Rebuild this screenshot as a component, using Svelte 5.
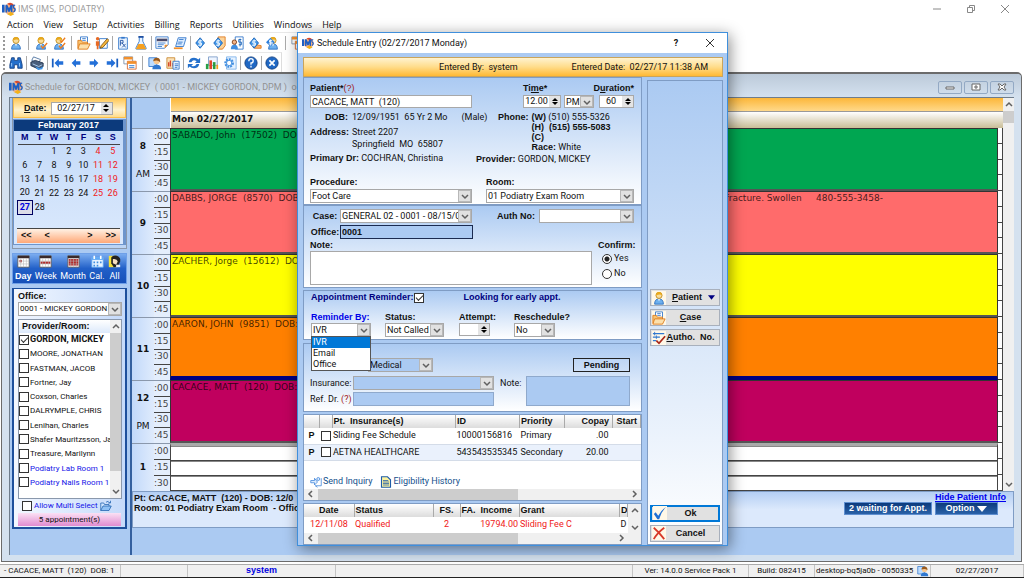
<script lang="ts">
  type Appt = { text: string; note?: string; color: string; tail?: boolean };

  const menus = ['Action', 'View', 'Setup', 'Activities', 'Billing', 'Reports', 'Utilities', 'Windows', 'Help'];

  // '|' is a wide separator, ':' is a narrow one
  const toolbarTop = ['person', '|', 'personCheck', 'doubleCheck', '|', 'folder', 'edit', ':', 'rx', 'flask', ':', 'svc', 'note', ':', 'dollar', 'dollarDoc', 'dollarPerson', 'dollarHand', 'dollarUser', '|', 'calendar'];
  const toolbarBottom = ['binoculars', ':', 'printer', ':', 'first', 'prev', 'next', 'last', 'calendar', '|', 'userCard', 'report', ':', 'refresh', 'chart', 'gearDoc', ':', 'help', ':', 'close'];

  const weekdays = ['M', 'T', 'W', 'T', 'F', 'S', 'S'];
  const weeks = [
    ['', '', 1, 2, 3, 4, 5],
    [6, 7, 8, 9, 10, 11, 12],
    [13, 14, 15, 16, 17, 18, 19],
    [20, 21, 22, 23, 24, 25, 26],
    [27, 28, '', '', '', '', '']
  ];

  const views = [
    { name: 'Day', icon: 'viewDay' },
    { name: 'Week', icon: 'viewWeek' },
    { name: 'Month', icon: 'viewMonth' },
    { name: 'Cal.', icon: 'viewCal' },
    { name: 'All', icon: 'viewAll' }
  ];

  let providers = $state([
    { name: 'GORDON, MICKEY', on: true },
    { name: 'MOORE, JONATHAN', on: false },
    { name: 'FASTMAN, JACOB', on: false },
    { name: 'Fortner, Jay', on: false },
    { name: 'Coxson, Charles', on: false },
    { name: 'DALRYMPLE, CHRIS', on: false },
    { name: 'Lenihan, Charles', on: false },
    { name: 'Shafer Mauritzsson, Ja', on: false },
    { name: 'Treasure, Marilynn', on: false },
    { name: 'Podiatry Lab Room 1', on: false, room: true },
    { name: 'Podiatry Nails Room 1', on: false, room: true }
  ]);

  const hours = [
    { hour: '8', half: 'AM', slots: [':00', ':15', ':30', ':45'] },
    { hour: '9', half: '', slots: [':00', ':15', ':30', ':45'] },
    { hour: '10', half: '', slots: [':00', ':15', ':30', ':45'] },
    { hour: '11', half: '', slots: [':00', ':15', ':30', ':45'] },
    { hour: '12', half: 'PM', slots: [':00', ':15', ':30', ':45'] },
    { hour: '1', half: '', slots: [':00', ':15', ':30'] }
  ];

  const appts: Appt[] = [
    { text: 'SABADO, John  (17502)  DOB:', color: '#00a651' },
    { text: 'DABBS, JORGE  (8570)  DOB:', note: 'e fracture. Swollen     480-555-3458-', color: '#ff6b6b' },
    { text: 'ZACHER, Jorge  (15612)  DOB:', color: '#ffff00' },
    { text: 'AARON, JOHN  (9851)  DOB:', color: '#ff8000', tail: true },
    { text: 'CACACE, MATT  (120)  DOB:', color: '#c0005e' }
  ];

  const reminderOptions = ['IVR', 'Email', 'Office'];
  let reminderBy = $state('IVR');
  let confirm = $state('Yes');
</script>

{#snippet icon(name: string)}
  <svg class="icon" viewBox="0 0 16 16" aria-hidden="true">
    {#if name === 'logo'}
      <circle cx="9" cy="8" r="6.5" fill="#f6b184" />
      <path d="M6 2q5-3 8 2l-3 1z" fill="#d9482b" />
      <path d="M0 3h3v9H0zM4 3h2l2 4 2-4h2v9h-2V8l-1 3H7L6 8v4H4z" fill="#1d5fc4" />
      <path d="M15 4q-2-1-2 1t2 3q0 3-2 3" fill="none" stroke="#1d5fc4" stroke-width="1.500" />
      <path d="M6 14l4-3 4 3-4 2z" fill="#f2b21b" />
    {:else if name === 'person' || name === 'personCheck' || name === 'doubleCheck' || name === 'dollarUser'}
      <path d="M3 15q0-6 5-6t5 6z" fill="#6db0ee" stroke="#2d6fc0" />
      <path d="M7 9l1 3 1-3z" fill="#fff" />
      <circle cx="8" cy="5" r="3.500" fill="#f8dc9a" stroke="#c08a1c" />
      <path d="M4.500 5q0-4 3.500-4t3.500 4q-2-2-7 0" fill="#e8a91d" />
      {#if name === 'personCheck' || name === 'doubleCheck'}
        <path d="M8 11l2 3 5-6" fill="none" stroke="#ee7a1c" stroke-width="1.500" />
      {/if}
      {#if name === 'doubleCheck'}
        <path d="M9 5l2 2 4-5" fill="none" stroke="#ee7a1c" stroke-width="1.500" />
      {:else if name === 'dollarUser'}
        <path d="M5 2l5 5-5 5-5-5z" fill="#2f80dc" />
        <path d="M7 5H4v2h3v2H3M5 4v7" fill="none" stroke="#fff" />
      {/if}
    {:else if name === 'folder'}
      <path d="M4 1h8v8H4z" fill="#fff" stroke="#3478cc" />
      <path d="M6 3h4M6 5h4" stroke="#3478cc" />
      <path d="M1 5h4l1 2h6v7H1z" fill="#f8c470" stroke="#dd7a1c" />
      <path d="M3 9h12l-3 6H1z" fill="#fce0ac" stroke="#dd7a1c" />
    {:else if name === 'edit'}
      <path d="M5 3h9v11H5z" fill="#fff" stroke="#3478cc" />
      <circle cx="3" cy="3" r="2" fill="#e86a24" />
      <path d="M1 6h4v5H4v4H2v-4H1z" fill="#e86a24" />
      <path d="M14 3l2 2-7 8-3 1 1-3z" fill="#f8b83c" stroke="#7a5313" />
    {:else if name === 'rx'}
      <path d="M3 2h10v13H3z" fill="#eaf4ff" stroke="#3478cc" />
      <path d="M6 1h4v2H6z" fill="#3478cc" />
      <path d="M5 11V5h3v3H5m2 0l4 5m0-4l-4 4" fill="none" stroke="#1f4fa0" />
    {:else if name === 'flask'}
      <path d="M6 1h4v5l4 8q0 1-1 1H3q-1 0-1-1l4-8z" fill="#eaf4ff" stroke="#3478cc" />
      <path d="M5 9h6l3 6H2z" fill="#f6a01f" />
      <path d="M5 1h6" stroke="#1f4fa0" stroke-width="2" />
    {:else if name === 'svc'}
      <path d="M1 1h14v9l-4 4H1z" fill="#fff" stroke="#3478cc" />
      <path d="M2 3h12v3H2z" fill="#4a4a6a" />
      <path d="M3 8h9M3 10h7M3 12h5" stroke="#3478cc" />
      <path d="M11 14v-4h4z" fill="#f2902c" />
    {:else if name === 'note'}
      <path d="M6 2h9l-3 10H3z" fill="#dcecff" stroke="#3478cc" />
      <path d="M7 4h5M6 7h5M5 9h5" stroke="#3478cc" />
      <path d="M1 13h10v2H1z" fill="#f2902c" />
    {:else if name === 'dollar' || name === 'dollarDoc' || name === 'dollarPerson' || name === 'dollarHand'}
      {#if name === 'dollarDoc'}
        <path d="M7 1h8v10l-3 4H7z" fill="#fbd39a" stroke="#e07a1c" />
      {:else if name === 'dollarPerson'}
        <path d="M6 1h9v14H6z" fill="#fff" stroke="#3478cc" />
        <path d="M1 15q0-5 4-5t4 5z" fill="#3f8de0" />
        <circle cx="5" cy="7" r="2.500" fill="#f3b58a" stroke="#7a3a14" />
        <path d="M13 4h-3v3h3v3h-3m1.500-7v9" fill="none" stroke="#1a64b8" />
      {:else if name === 'dollarHand'}
        <path d="M6 13l3-3 6 1v3H8z" fill="#f8b070" stroke="#e07a1c" />
      {/if}
      {#if name !== 'dollarPerson'}
        <path d="M7 2l5 6-5 6-5-6z" fill="#3f96ea" stroke="#1a64b8" />
        <path d="M9.500 5.500h-4v2.500h3v2.500h-4M7 4v8" fill="none" stroke="#fff" />
      {/if}
    {:else if name === 'calendar'}
      <path d="M1 1h10v8H1z" fill="#fff" stroke="#7d8fa8" />
      <path d="M1 1h10v3H1z" fill="#f2902c" />
      <path d="M5 6h10v9H5z" fill="#fff" stroke="#d8662b" />
      <path d="M5 6h10v3H5z" fill="#f2902c" />
      <path d="M7 11h6M7 13h6" stroke="#3478cc" />
    {:else if name === 'binoculars'}
      <path d="M3 2h3v3h4V2h3l2 8v4h-5v-4H6v4H1v-4z" fill="#2470cc" stroke="#123f80" />
      <path d="M3 8v4M12 8v4" stroke="#9fd0ff" />
    {:else if name === 'printer'}
      <path d="M4 1l8 3-2 4-8-3z" fill="#fff" stroke="#4a6f9c" />
      <path d="M1 7l5-2 9 3v4l-5 3-9-4z" fill="#4a5f7c" stroke="#22344e" />
      <path d="M3 9l7 3 4-2" fill="none" stroke="#b8d8f8" />
      <path d="M6 12l5 2 4-2-1 3-5 1z" fill="#3f96ea" />
    {:else if name === 'first'}
      <path d="M2 3v10" stroke="#1a5fc0" stroke-width="2" />
      <path d="M4 8l5-5v3h5v4H9v3z" fill="#2470d8" />
    {:else if name === 'prev'}
      <path d="M3 8l5-5v3h5v4H8v3z" fill="#2470d8" />
    {:else if name === 'next'}
      <path d="M13 8L8 3v3H3v4h5v3z" fill="#2470d8" />
    {:else if name === 'last'}
      <path d="M14 3v10" stroke="#1a5fc0" stroke-width="2" />
      <path d="M12 8L7 3v3H2v4h5v3z" fill="#2470d8" />
    {:else if name === 'userCard'}
      <path d="M1 2h9v10H1z" fill="#bcdcff" stroke="#3478cc" />
      <path d="M5 15q0-5 5-5t5 5z" fill="#2f78d0" />
      <circle cx="10" cy="6" r="3.500" fill="#f8c890" />
      <path d="M6 6q0-4 4-4t4 5q-3-3-8-1" fill="#9a5a1c" />
    {:else if name === 'report'}
      <path d="M1 2h9v12H1z" fill="#fbe2b8" stroke="#c98a34" />
      <path d="M3 12V7m2 5V5m3 7V8" stroke="#d84a2a" stroke-width="1.500" />
      <path d="M8 6h7v9H8z" fill="#eaf4ff" stroke="#3478cc" />
      <path d="M10 9h4M10 11h4M10 13h3" stroke="#3478cc" />
    {:else if name === 'refresh'}
      <path d="M2 7q1-5 6-5 3 0 5 2l2-2v6H9l2-2q-4-3-6 1z" fill="#2470cc" />
      <path d="M14 9q-1 5-6 5-3 0-5-2l-2 2V9h6l-2 2q4 2 6-2z" fill="#2470cc" />
    {:else if name === 'chart'}
      <path d="M4 1h10v10H4z" fill="#eef5ff" stroke="#7d9cc8" />
      <path d="M1 9h3v6H1z" fill="#28a046" />
      <path d="M5 5h3v10H5z" fill="#e0452a" />
      <path d="M9 7h3v8H9z" fill="#2c9a3e" />
      <path d="M13 10h2v5h-2z" fill="#f2a01f" />
    {:else if name === 'gearDoc'}
      <path d="M4 1h11v14H4z" fill="#e6f2ff" stroke="#7fb2ea" />
      <circle cx="7" cy="8" r="4" fill="none" stroke="#3f8de0" stroke-width="3" stroke-dasharray="2 1" />
      <circle cx="7" cy="8" r="3" fill="#fff" stroke="#3f8de0" />
    {:else if name === 'help' || name === 'close'}
      <circle cx="8" cy="8" r="7" fill="#1f68c4" stroke="#123f80" />
      {#if name === 'help'}
        <path d="M5.500 6q0-3 2.500-3t2.500 2.500-2.500 2.500v2m0 1v2" fill="none" stroke="#fff" stroke-width="1.500" />
      {:else}
        <path d="M5 5l6 6m0-6l-6 6" stroke="#fff" stroke-width="2" />
      {/if}
    {:else if name === 'viewDay' || name === 'viewWeek' || name === 'viewMonth'}
      <path d="M1 1h14v14H1z" fill="#fff" stroke="#555" />
      <path d="M1 1h14v3H1z" fill="#3a2a2a" />
      {#if name === 'viewMonth'}
        <path d="M2 5h12v8H2z" fill="#b02a2a" />
      {:else if name === 'viewWeek'}
        <path d="M2 8h12v3H2z" fill="#b02a2a" />
      {:else}
        <path d="M3 6h3v3H3z" fill="#b02a2a" />
      {/if}
      <path d="M4.500 4v11M8 4v11M11.500 4v11M1 7.500h14M1 11h14" stroke="#b8b8b8" stroke-width=".7" />
    {:else if name === 'viewCal'}
      <path d="M1 3h14v12H1z" fill="#e8f3ff" stroke="#5fa8f4" />
      <path d="M1 3h14v3H1z" fill="#5fa8f4" />
      <path d="M4 1v4M12 1v4" stroke="#fff" stroke-width="2" />
      <path d="M3 8h2v2H3zM7 8h2v2H7zM11 8h2v2h-2zM3 12h2v2H3zM7 12h2v2H7z" fill="#3f8de0" />
    {:else if name === 'viewAll'}
      <path d="M1 1h10v14H1z" fill="#f4e23c" />
      <path d="M4 3q2-3 7-2 5 2 4 7l-3 6-5 1-3-5z" fill="#222" />
      <path d="M6 5q5-1 6 3l-2 4-4-2z" fill="#f8e0c0" />
      <path d="M10 12h5v3h-5z" fill="#eee" />
    {:else if name === 'open'}
      <path d="M1 14V4h4l1 2h6v2" fill="#cfe5ff" stroke="#1c5fae" />
      <path d="M1 14l3-6h11l-3 6z" fill="#8fc0f4" stroke="#1c5fae" />
      <path d="M8 3q3-3 5 1m1-3v3h-3" fill="none" stroke="#1c5fae" />
    {:else if name === 'auth'}
      <path d="M1 3h13M1 7h8M1 11h4" stroke="#2f78d0" stroke-width="1.500" />
      <path d="M3 1v4M5 5v4" stroke="#2f78d0" />
      <path d="M5 11l3 3 7-8" fill="none" stroke="#a8281a" stroke-width="2" />
    {:else if name === 'ok'}
      <path d="M1 9l2-2 3 4q3-6 9-10-6 6-8 14H5z" fill="#1f6fd4" />
    {:else if name === 'cancel'}
      <path d="M2 2q6 5 12 13M14 2Q6 8 2 15" fill="none" stroke="#d83a2a" stroke-width="2" />
    {:else if name === 'send'}
      <path d="M1 6h5V3l4 5-4 4v-3H1z" fill="#dcecff" stroke="#3a80d8" />
      <circle cx="11" cy="4" r="2" fill="#dcecff" stroke="#3a80d8" />
      <path d="M15 3v10H7m3 2l-3-2" fill="none" stroke="#3a80d8" />
    {:else if name === 'history'}
      <path d="M2 1h8l4 4v10H2z" fill="#fdf3a0" stroke="#1f5ca8" stroke-width="1.500" />
      <path d="M4 6h7M4 8h8M4 10h8M4 12h8" stroke="#1f5ca8" />
    {/if}
  </svg>
{/snippet}

{#snippet arrow(dir: 'up' | 'down' | 'left' | 'right')}
  <svg class="chev {dir}" viewBox="0 0 8 8" aria-hidden="true"><path d="M1 3l3 3 3-3" fill="none" stroke="#606060" stroke-width="1.500" /></svg>
{/snippet}

{#snippet combo(id: string, value: string, kind: string)}
  <span class="combo {kind}">
    <select {id}><option>{value}</option></select>
    <i>{@render arrow('down')}</i>
  </span>
{/snippet}

{#snippet spinner(id: string, value: string, kind: string)}
  <span class="spin {kind}">
    <input {id} type="text" {value} />
    <span class="spin-btns">
      <button type="button" aria-label="Increase"><svg viewBox="0 0 6 4"><path d="M0 4l3-3 3 3z" /></svg></button>
      <button type="button" aria-label="Decrease"><svg viewBox="0 0 6 4"><path d="M0 0l3 3 3-3z" /></svg></button>
    </span>
  </span>
{/snippet}

{#snippet toolbar(items: string[])}
  <div class="toolbar">
    <span class="grip"></span>
    {#each items as item}
      {#if item === '|'}
        <span class="sep wide"></span>
      {:else if item === ':'}
        <span class="sep"></span>
      {:else}
        <button type="button" class="tool" aria-label={item}>{@render icon(item)}</button>
      {/if}
    {/each}
  </div>
{/snippet}

<div class="app">
  <header class="titlebar">
    {@render icon('logo')}
    <span>IMS (IMS, PODIATRY)</span>
    <div class="win-btns">
      <button type="button" aria-label="Minimize"><svg viewBox="0 0 10 10"><path d="M1 5h8" /></svg></button>
      <button type="button" aria-label="Restore"><svg viewBox="0 0 10 10"><path d="M1.500 3.500h5v5h-5zM3.500 3.500v-2h5v5h-2" /></svg></button>
      <button type="button" aria-label="Close"><svg viewBox="0 0 10 10"><path d="M1 1l8 8M9 1L1 9" /></svg></button>
    </div>
  </header>

  <nav class="menubar">
    {#each menus as menu}
      <button type="button">{menu}</button>
    {/each}
  </nav>

  {@render toolbar(toolbarTop)}
  {@render toolbar(toolbarBottom)}

  <main class="mdi">
    <div class="mdi-title">
      {@render icon('logo')}
      <span>Schedule for GORDON, MICKEY  ( 0001 - MICKEY GORDON, DPM )  o</span>
      <div class="mdi-btns">
        <button type="button" aria-label="Minimize window"><svg viewBox="0 0 10 8"><path d="M1 4h8v2H1z" /></svg></button>
        <button type="button" aria-label="Restore window"><svg viewBox="0 0 10 8"><path d="M1 1h8v6H1zM4 3h2v2H4z" /></svg></button>
        <button type="button" aria-label="Close window"><svg viewBox="0 0 10 8"><path d="M1 1h2l2 2 2-2h2L7 4l2 3H7L5 5 3 7H1l2-3z" /></svg></button>
      </div>
    </div>

    <div class="mdi-body">
      <aside class="side">
        <section class="cal-box">
          <div class="date-row">
            <label for="date"><u>D</u>ate:</label>
            {@render spinner('date', '02/27/17', 'date')}
          </div>
          <div class="cal">
            <div class="cal-title">February 2017</div>
            <table class="cal-table">
              <thead>
                <tr>{#each weekdays as day}<th>{day}</th>{/each}</tr>
              </thead>
              <tbody>
                {#each weeks as week}
                  <tr>
                    {#each week as day, i}
                      <td class:weekend={i > 4} class:today={day === 27}>{day}</td>
                    {/each}
                  </tr>
                {/each}
              </tbody>
            </table>
            <div class="cal-nav">
              <button type="button">&lt;&lt;</button>
              <button type="button">&lt;</button>
              <span></span>
              <button type="button">&gt;</button>
              <button type="button">&gt;&gt;</button>
            </div>
          </div>
        </section>

        <section class="views">
          {#each views as view, i}
            <button type="button" class:active={i === 0}>
              {@render icon(view.icon)}
              <span>{view.name}</span>
            </button>
          {/each}
        </section>

        <section class="prov-box">
          <label class="office-label" for="office">Office:</label>
          {@render combo('office', '0001 - MICKEY GORDON', 'office')}
          <div class="prov-list">
            <div class="prov-items">
              <div class="prov-head">Provider/Room:</div>
              {#each providers as p}
                <label class="prov" class:selected={p.on} class:room={p.room}>
                  <input type="checkbox" bind:checked={p.on} />
                  <span>{p.name}</span>
                </label>
              {/each}
            </div>
            <div class="vscroll">
              {@render arrow('up')}
              <span class="thumb tall"></span>
              {@render arrow('down')}
            </div>
          </div>
          <label class="multi">
            <input type="checkbox" />
            <span>Allow Multi Select</span>
            {@render icon('open')}
          </label>
          <div class="count">5 appointment(s)</div>
        </section>
      </aside>

      <section class="sched">
        <div class="sched-main">
          <div class="sched-grid">
            <div class="sched-head">
              <div class="corner"></div>
              <div class="day-head">
                <div class="gold"></div>
                <div class="day-name">Mon 02/27/2017</div>
              </div>
            </div>
            {#each hours as h, i}
              <div class="hour-row" class:short={h.slots.length < 4}>
                <div class="hour">
                  <b>{h.hour}</b>
                  {#if h.half}<span>{h.half}</span>{/if}
                </div>
                <div class="slots">
                  {#each h.slots as s}<span>{s}</span>{/each}
                </div>
                {#if appts[i]}
                  <div class="appt" class:tail={appts[i].tail} style="background-color: {appts[i].color}">
                    <span>{appts[i].text}</span>
                    {#if appts[i].note}<span class="appt-note">{appts[i].note}</span>{/if}
                  </div>
                {:else}
                  <div class="free">
                    {#each h.slots as _}<span></span>{/each}
                  </div>
                {/if}
                <div class="edge">
                  {#each h.slots as _}<span></span>{/each}
                </div>
              </div>
            {/each}
          </div>
          <div class="vscroll">
            {@render arrow('up')}
            <span class="thumb"></span>
            <span class="fill"></span>
            {@render arrow('down')}
          </div>
        </div>

        <div class="pt-info">
          <div class="pt-text">
            <div>Pt: CACACE, MATT  (120) - DOB: 12/0</div>
            <div>Room: 01 Podiatry Exam Room  - Offic</div>
          </div>
          <div class="pt-actions">
            <button type="button" class="navy waiting">2 waiting for Appt.</button>
            <div>
              <a href="#patient-info">Hide Patient Info</a>
              <button type="button" class="navy option">Option <svg viewBox="0 0 10 6"><path d="M0 0h10L5 6z" fill="#fff" /></svg></button>
            </div>
          </div>
        </div>
      </section>
    </div>
  </main>

  <footer class="status">
    <span class="s-pt">- CACACE, MATT  (120)  DOB: 1</span>
    <span class="s-gap"></span>
    <span class="s-user">system</span>
    <span class="s-fill"></span>
    <span class="s-ver">Ver: 14.0.0 Service Pack 1</span>
    <span class="s-build">Build: 082415</span>
    <span class="s-host">desktop-bq5ja0b - 0050335{@render icon('userCard')}</span>
    <span class="s-date">02/27/2017</span>
  </footer>

  <div class="dialog" role="dialog" aria-labelledby="dlg-title">
    <div class="dlg-title">
      {@render icon('logo')}
      <span id="dlg-title">Schedule Entry (02/27/2017 Monday)</span>
      <button type="button" aria-label="Help">?</button>
      <button type="button" aria-label="Close dialog"><svg viewBox="0 0 10 10"><path d="M1 1l8 8M9 1L1 9" /></svg></button>
    </div>
    <div class="dlg-body">
      <div class="entered">
        <span>Entered By:  system</span>
        <span>Entered Date:  02/27/17 11:38 AM</span>
      </div>

      <div class="dlg-cols">
        <form class="dlg-form">
          <fieldset class="grp patient">
            <div class="top-row">
              <div class="field grow">
                <label for="patient">Patient*<em>(?)</em></label>
                <input id="patient" type="text" value="CACACE, MATT  (120)" />
              </div>
              <div class="field">
                <label for="time">Ti<u>m</u>e*</label>
                <div class="pair">
                  {@render spinner('time', '12.00', 'time')}
                  <span class="combo ampm">
                    <select aria-label="AM or PM"><option>PM</option></select>
                    <i>{@render arrow('down')}</i>
                  </span>
                </div>
              </div>
              <div class="field dur">
                <label for="duration">D<u>u</u>ration*</label>
                {@render spinner('duration', '60', 'mins')}
              </div>
            </div>
            <div class="facts">
              <div class="facts-l">
                <div class="fact"><b>DOB:</b><span>12/09/1951  65 Yr 2 Mo</span><span class="sex">(Male)</span></div>
                <div class="fact addr"><b>Address:</b><span>Street 2207<br />Springfield  MO  65807</span></div>
                <div class="line"><b>Primary Dr:</b>  COCHRAN, Christina</div>
              </div>
              <div class="facts-r">
                <div class="phones">
                  <b>Phone:</b>
                  <div>
                    <div class="line"><b>(W)</b> (510) 555-5326</div>
                    <div class="line"><b>(H)  (515) 555-5083</b></div>
                    <div class="line"><b>(C)</b></div>
                    <div class="line"><b>Race:</b>   White</div>
                  </div>
                </div>
                <div class="line"><b>Provider:</b>  GORDON, MICKEY</div>
              </div>
            </div>
            <div class="proc-row">
              <div class="field proc">
                <label for="procedure">Procedure:</label>
                {@render combo('procedure', 'Foot Care', '')}
              </div>
              <div class="field room-f">
                <label for="room">Room:</label>
                {@render combo('room', '01 Podiatry Exam Room', '')}
              </div>
            </div>
          </fieldset>

          <fieldset class="grp case">
            <div class="case-row">
              <label for="case">Case:</label>
              {@render combo('case', 'GENERAL 02  -  0001 - 08/15/0', 'w-case')}
              <label class="auth" for="authno">Auth No:</label>
              {@render combo('authno', '', 'grow')}
            </div>
            <div class="case-row">
              <label for="office-no">Office:</label>
              <input id="office-no" class="office-no" type="text" value="0001" readonly />
            </div>
            <div class="note-row">
              <div class="field grow">
                <label for="note">Note:</label>
                <textarea id="note"></textarea>
              </div>
              <div class="confirm">
                <b>Confirm:</b>
                <label><input type="radio" name="confirm" value="Yes" bind:group={confirm} />Yes</label>
                <label><input type="radio" name="confirm" value="No" bind:group={confirm} />No</label>
              </div>
            </div>
          </fieldset>

          <fieldset class="grp reminder">
            <div class="rem-top">
              <label>Appointment Reminder:<input type="checkbox" checked /></label>
              <span>Looking for early appt.</span>
            </div>
            <div class="rem-row">
              <div class="field rem-by">
                <label class="blue" for="reminder-by">Reminder By:</label>
                <span class="combo">
                  <select id="reminder-by" bind:value={reminderBy}>
                    {#each reminderOptions as o}<option>{o}</option>{/each}
                  </select>
                  <i>{@render arrow('down')}</i>
                </span>
                <ul class="dropdown">
                  {#each reminderOptions as o}
                    <li class:on={o === reminderBy}>{o}</li>
                  {/each}
                </ul>
              </div>
              <div class="field rem-status">
                <label for="rem-status">Status:</label>
                {@render combo('rem-status', 'Not Called', '')}
              </div>
              <div class="field rem-attempt">
                <label for="attempt">Attempt:</label>
                {@render spinner('attempt', '', 'attempt')}
              </div>
              <div class="field rem-re">
                <label for="resched">Reschedule?</label>
                {@render combo('resched', 'No', 'resched')}
              </div>
            </div>
          </fieldset>

          <fieldset class="grp medical">
            <div class="med-top">
              <input type="checkbox" aria-label="Medical" />
              <span class="combo soft">
                <select aria-label="Type"><option>Medical</option></select>
                <i>{@render arrow('down')}</i>
              </span>
              <button type="button" class="pending">Pending</button>
            </div>
            <div class="med-grid">
              <div class="med-left">
                <div><label for="insurance">Insurance:</label>{@render combo('insurance', '', 'soft grow')}</div>
                <div><label for="refdr">Ref. Dr. <em>(?)</em></label><input id="refdr" type="text" /></div>
              </div>
              <label for="med-note">Note:</label>
              <textarea id="med-note"></textarea>
            </div>
          </fieldset>

          <section class="tbl ins">
            <table>
              <colgroup><col style="width: 15px" /><col style="width: 13px" /><col /><col style="width: 64px" /><col style="width: 45px" /><col style="width: 48px" /><col style="width: 28px" /></colgroup>
              <thead>
                <tr><th></th><th></th><th>Pt.  Insurance(s)</th><th>ID</th><th>Priority</th><th class="num">Copay</th><th class="num">Start</th></tr>
              </thead>
              <tbody>
                <tr><td class="p">P</td><td><input type="checkbox" aria-label="Sliding Fee Schedule" /></td><td>Sliding Fee Schedule</td><td>10000156816</td><td>Primary</td><td class="num">.00</td><td></td></tr>
                <tr><td class="p">P</td><td><input type="checkbox" aria-label="AETNA HEALTHCARE" /></td><td>AETNA HEALTHCARE</td><td>543543535345</td><td>Secondary</td><td class="num">20.00</td><td></td></tr>
              </tbody>
            </table>
            <div class="links">
              <a href="#inquiry">{@render icon('send')}Send Inquiry</a>
              <a href="#history">{@render icon('history')}Eligibility History</a>
            </div>
            <div class="hscroll">{@render arrow('left')}<span></span>{@render arrow('right')}</div>
          </section>

          <section class="tbl fa">
            <div class="fa-row">
              <div class="fa-main">
                <table>
                  <colgroup><col style="width: 50px" /><col style="width: 79px" /><col style="width: 27px" /><col style="width: 59px" /><col /><col style="width: 8px" /></colgroup>
                  <thead>
                    <tr><th class="mid">Date</th><th>Status</th><th class="mid">FS.</th><th>FA.  Income</th><th>Grant</th><th>D</th></tr>
                  </thead>
                  <tbody>
                    <tr class="red"><td class="mid">12/11/08</td><td>Qualified</td><td class="mid">2</td><td class="inc">19794.00</td><td>Sliding Fee C</td><td class="cut">D</td></tr>
                  </tbody>
                </table>
                <div class="hscroll">{@render arrow('left')}<span></span>{@render arrow('right')}</div>
              </div>
              <div class="fa-spin">{@render arrow('up')}{@render arrow('down')}</div>
            </div>
          </section>
        </form>

        <div class="dlg-side">
          <button type="button">{@render icon('person')}<span><u>P</u>atient</span><svg class="tri" viewBox="0 0 8 5"><path d="M0 0h8L4 5z" fill="#000080" /></svg></button>
          <button type="button">{@render icon('folder')}<span><u>C</u>ase</span></button>
          <button type="button">{@render icon('auth')}<span><u>A</u>utho.  No.</span></button>
          <div class="space"></div>
          <button type="button" class="default">{@render icon('ok')}<span>Ok</span></button>
          <button type="button">{@render icon('cancel')}<span>Cancel</span></button>
        </div>
      </div>
    </div>
  </div>
</div>

<style>
  :global(body) {
    background: #fff;
  }
  .app, .app * {
    box-sizing: border-box;
  }
  .app {
    --plain: 9px/11px Roboto, "Liberation Sans", sans-serif;
    --strong: bold 9px/11px "Liberation Sans", Arial, sans-serif;
    position: relative;
    min-height: 100vh;
    display: flex;
    flex-direction: column;
    overflow: hidden;
    background: #fff;
    color: #111;
    font: var(--plain);
  }
  /* the labels carry double spaces */
  span, label, b, td, th, .pt-text div, .line {
    white-space: pre;
  }
  .combo, .spin, .spin-btns {
    white-space: normal;
  }
  b, th {
    font: var(--strong);
  }
  b {
    line-height: inherit;
  }
  /* keeps the bold face from stretching a mixed line */
  .line b {
    line-height: 0;
  }
  button, input, select, textarea {
    font: inherit;
    color: inherit;
    margin: 0;
    padding: 0;
    border: 0;
    border-radius: 0;
    background: none;
  }
  fieldset {
    margin: 0;
    padding: 0;
    border: 0;
    min-width: 0;
  }
  em {
    font-style: normal;
    font-weight: normal;
    color: #a02020;
  }
  .icon {
    width: 14px;
    height: 14px;
    flex: none;
    display: block;
  }
  .chev {
    width: 8px;
    height: 8px;
    flex: none;
    display: block;
  }
  .chev.up { transform: rotate(180deg); }
  .chev.left { transform: rotate(90deg); }
  .chev.right { transform: rotate(-90deg); }
  input[type="checkbox"] {
    appearance: none;
    width: 10px;
    height: 10px;
    flex: none;
    border: 1px solid #333;
    background: #fff;
  }
  input[type="checkbox"]:checked::after {
    content: "";
    display: block;
    width: 6px;
    height: 3px;
    margin: 1px;
    border: solid #333;
    border-width: 0 0 1px 1px;
    transform: rotate(-45deg);
  }
  input[type="radio"] {
    appearance: none;
    width: 10px;
    height: 10px;
    border: 1px solid #333;
    border-radius: 50%;
    background: #fff;
  }
  input[type="radio"]:checked {
    background: radial-gradient(#222 0 2px, #fff 3px);
  }

  /* main window chrome */
  .titlebar {
    display: flex;
    align-items: center;
    gap: 2px;
    height: 17px;
    padding-left: 2px;
    color: #999;
    font: 9px/14px "Open Sans", sans-serif;
  }
  .win-btns {
    display: flex;
    gap: 24px;
    margin-left: auto;
    padding-right: 14px;
  }
  .win-btns button {
    height: 10px;
  }
  .win-btns svg, .dlg-title button svg {
    width: 10px;
    height: 10px;
    display: block;
    fill: none;
    stroke: #888;
  }
  .menubar {
    display: flex;
    gap: 10px;
    height: 15px;
    padding-left: 7px;
    font: 9px/14px "Open Sans", sans-serif;
  }
  .toolbar {
    display: flex;
    align-items: center;
    align-self: flex-start;
    height: 20px;
    border-top: 1px solid #e8e8e8;
    border-right: 1px solid #ddd;
  }
  .grip {
    width: 2px;
    height: 14px;
    margin: 0 2px 0 3px;
    background: repeating-linear-gradient(#999 0 2px, #fff 2px 4px);
  }
  .tool {
    width: 18px;
    padding: 2px;
  }
  .sep {
    width: 1px;
    height: 14px;
    margin: 0 1px;
    background: #aaa;
  }
  .sep.wide {
    margin: 0 3px;
  }

  .mdi {
    flex: 1;
    display: flex;
    flex-direction: column;
    margin: 0 2px 2px 1px;
    padding: 0 7px 6px;
    border: 1px solid #6b6b6b;
    border-top-width: 2px;
    border-radius: 5px 5px 0 0;
    background: #d4e1ef;
  }
  .mdi-title {
    display: flex;
    align-items: center;
    gap: 2px;
    height: 23px;
    margin: 0 -7px;
    padding: 3px 7px 0;
    border-radius: 4px 4px 0 0;
    background: linear-gradient(#bccad9, #d4e1ef);
    color: #929292;
    font: 9px/14px Roboto, sans-serif;
  }
  .mdi-btns {
    display: flex;
    gap: 2px;
    margin-left: auto;
  }
  .mdi-btns button {
    display: flex;
    align-items: center;
    justify-content: center;
    width: 24px;
    height: 13px;
    border: 1px solid #93a9c4;
    border-radius: 2px;
  }
  .mdi-btns svg {
    width: 10px;
    height: 8px;
    fill: #fff;
    stroke: #666;
  }
  .mdi-body {
    flex: 1;
    display: flex;
    border: 1px solid #6f7d8c;
    border-width: 1px 0 0 1px;
    background: #abcaf2;
  }

  /* left panel */
  .side {
    width: 122px;
    flex: none;
    display: flex;
    flex-direction: column;
    gap: 4px;
    padding: 0 3px 0 2px;
    border-right: 2px solid #34609f;
  }
  .cal-box {
    border: 1px solid #8a98ac;
    border-top: 0;
    padding-bottom: 3px;
    background: #bcd4f4;
  }
  .date-row {
    display: flex;
    align-items: center;
    gap: 4px;
    height: 20px;
    padding-left: 10px;
    border: 1px solid #fbc04c;
    background: linear-gradient(#ffc95c, #fff3cf 60%, #ffdc8c);
  }
  .date-row label {
    font: var(--strong);
  }
  .cal {
    margin: 1px 0 0;
    border: 1px solid #6e95cc;
    border-right-width: 3px;
    background: linear-gradient(#c2d9f8, #dbe9fd);
  }
  .cal-title {
    height: 11px;
    background: #0c3a7c;
    color: #fff;
    font: var(--strong);
    text-align: center;
  }
  .cal-table {
    width: calc(100% - 6px);
    margin: 1px 3px 0;
    border-collapse: collapse;
    table-layout: fixed;
    text-align: center;
  }
  .cal-table th, .cal-table td {
    padding: 0;
    height: 14px;
    line-height: 11px;
  }
  .cal-table th {
    height: 12px;
    color: #000080;
    border-bottom: 1px solid #444;
  }
  .weekend {
    color: #f02020;
  }
  .cal-table .today {
    border: 1px solid #000060;
    color: #0000e0;
    font-weight: bold;
    background: #dcdce8;
  }
  .cal-nav {
    display: flex;
    align-items: center;
    gap: 13px;
    height: 15px;
    margin: 13px 3px 1px;
    padding: 0 4px;
    border-top: 1px solid #444;
    background: linear-gradient(#fff1e4, #ffa877);
    font: var(--strong);
  }
  .cal-nav span {
    flex: 1;
  }
  .views {
    display: flex;
    justify-content: space-between;
    height: 31px;
    padding: 1px 5px 0 2px;
    border: 1px solid #6fa0e8;
    background: linear-gradient(#7aacf0, #2260c8 50%, #1650b8);
    color: #fff;
  }
  .views button {
    display: flex;
    flex-direction: column;
    align-items: center;
    gap: 3px;
  }
  .views .icon {
    width: 13px;
    height: 13px;
  }
  .views .active {
    font: var(--strong);
  }
  .prov-box {
    display: flex;
    flex-direction: column;
    padding: 2px 3px 1px 4px;
    border: 2px solid #1d4f9c;
    border-top: 1px solid #1d4f9c;
    background: linear-gradient(90deg, #f2f7ff, #c5dafa);
    font-size: 8px;
  }
  .office-label {
    font: var(--strong);
  }
  .prov-list {
    display: flex;
    min-height: 180px;
    margin-top: 3px;
    border: 1px solid #8a98ac;
    background: #fff;
  }
  .prov-items {
    flex: 1;
    min-width: 0;
    display: flex;
    flex-direction: column;
    padding-bottom: 8px;
  }
  .prov-head {
    height: 13px;
    padding: 1px 3px;
    background: linear-gradient(#fff, #dce9fb);
    font: var(--strong);
  }
  .prov {
    flex: 1;
    display: flex;
    align-items: center;
    gap: 1px;
    overflow: hidden;
  }
  .prov.selected {
    font-size: 9px;
    font-weight: bold;
  }
  .room, .multi {
    color: #1414e8;
  }
  .vscroll {
    display: flex;
    flex-direction: column;
    align-items: center;
    gap: 2px;
    width: 11px;
    flex: none;
    padding: 3px 0;
    background: #f0f0f0;
  }
  .thumb {
    width: 100%;
    height: 12px;
    background: #cdcdcd;
  }
  .thumb.tall {
    flex: 1;
    margin-bottom: 14px;
  }
  .fill {
    flex: 1;
  }
  .multi {
    display: flex;
    align-items: center;
    gap: 2px;
    height: 14px;
    padding-left: 4px;
  }
  .multi .icon {
    width: 12px;
    height: 12px;
  }
  .count {
    height: 13px;
    margin-right: 1px;
    background: linear-gradient(#fbe0f4, #e08cd0);
    text-align: center;
    line-height: 13px;
  }

  /* combos and spinners */
  .combo {
    position: relative;
    display: flex;
    height: 14px;
    border: 1px solid #a8a8a8;
    background: #fff;
  }
  .combo select {
    appearance: none;
    flex: 1;
    width: 100%;
    min-width: 0;
    padding: 0 12px 0 1px;
    line-height: 12px;
  }
  .combo i {
    position: absolute;
    top: 0;
    right: 0;
    bottom: 0;
    width: 13px;
    display: flex;
    align-items: center;
    justify-content: center;
    border: 1px solid #b8b8b8;
    background: #e1e1e1;
    pointer-events: none;
  }
  .combo.soft {
    background: #abcaf2;
  }
  .spin {
    display: flex;
    height: 13px;
    border: 1px solid #a8a8a8;
    background: #fff;
  }
  .spin input {
    flex: 1;
    width: 100%;
    min-width: 0;
    text-align: center;
  }
  .spin-btns {
    display: flex;
    flex-direction: column;
    width: 11px;
    flex: none;
    background: #e4e4e4;
  }
  .spin-btns button {
    flex: 1;
    display: flex;
    align-items: center;
    justify-content: center;
  }
  .spin-btns svg {
    width: 6px;
    height: 4px;
  }
  .spin.date { width: 62px; }
  .spin.time { width: 38px; }
  .combo.ampm { width: 30px; }
  .spin.mins { width: 35px; align-self: flex-end; }
  .spin.attempt { width: 31px; }
  .grow { flex: 1; }

  /* schedule */
  .sched {
    flex: 1;
    min-width: 0;
    display: flex;
    flex-direction: column;
  }
  .sched-main {
    display: flex;
  }
  .sched-grid {
    flex: 1;
    min-width: 0;
  }
  .sched-head {
    display: flex;
    height: 30px;
  }
  .corner {
    width: 38px;
    flex: none;
  }
  .day-head {
    flex: 1;
    border-left: 1px solid #fff;
  }
  .gold {
    height: 14px;
    background: linear-gradient(#fcb73a, #ffd98a);
    border-bottom: 1px solid #999;
  }
  .day-name {
    height: 16px;
    padding-left: 1px;
    background: linear-gradient(#fff, #c9bd97);
    font: bold 9px/15px "DejaVu Sans", sans-serif;
  }
  .hour-row {
    display: flex;
    height: 63px;
    font: 9px/11px "DejaVu Sans", sans-serif;
  }
  .hour-row.short {
    height: 48px;
  }
  .hour {
    width: 22px;
    display: flex;
    flex-direction: column;
    align-items: center;
    justify-content: center;
    gap: 17px;
    border-top: 1px solid #8a98ac;
    background: linear-gradient(90deg, #c2d9fa, #dfebfc);
  }
  .hour b {
    font-family: "DejaVu Sans", sans-serif;
  }
  .slots {
    width: 16px;
    display: flex;
    flex-direction: column;
    border-top: 1px solid #8a98ac;
    background: #e4eefc;
    color: #444;
  }
  .slots span {
    flex: 1;
    display: flex;
    align-items: center;
    border-bottom: 1px solid #444;
  }
  .slots span:last-child {
    border-bottom: 0;
  }
  .appt {
    flex: 1;
    min-width: 0;
    display: flex;
    justify-content: space-between;
    padding: 1px 114px 0 1px;
    border: 1px solid #333;
    border-bottom: 2px solid #555;
    color: rgba(0, 0, 0, 0.75);
    overflow: hidden;
  }
  .appt.tail {
    border-bottom: 4px solid #000080;
  }
  .free, .edge {
    display: flex;
    flex-direction: column;
  }
  .free {
    flex: 1;
    border: 1px solid #444;
    border-top: 3px solid #aaa;
    border-bottom: 0;
  }
  .free span, .edge span {
    flex: 1;
    background: #fff;
    border-bottom: 1px solid #444;
  }
  .free span {
    border-top: 1px solid #888;
  }
  .edge {
    width: 5px;
    border-right: 1px solid #444;
  }
  .pt-info {
    display: flex;
    justify-content: space-between;
    height: 37px;
    padding: 0 7px 0 1px;
    border: 1px solid #7f9cc4;
    background: linear-gradient(#b4cff4, #dce9fc 50%);
    font: var(--strong);
  }
  .pt-text {
    padding-top: 1px;
    line-height: 10px;
  }
  .pt-actions {
    display: flex;
    align-items: flex-end;
    gap: 3px;
    padding-bottom: 12px;
  }
  .pt-actions a {
    display: block;
    color: #0000f0;
    line-height: 10px;
    white-space: nowrap;
  }
  .navy {
    display: flex;
    align-items: center;
    justify-content: center;
    gap: 3px;
    height: 13px;
    color: #fff;
    background: linear-gradient(#0c3a7c, #2a62a8);
    border: 1px solid #5f8fd0;
  }
  .waiting { width: 88px; }
  .option { width: 63px; }
  .option svg {
    width: 10px;
    height: 6px;
  }

  .status {
    display: flex;
    height: 14px;
    border-top: 1px solid #aaa;
    border-bottom: 1px solid #222;
    background: #f0f0f0;
    font-size: 8px;
  }
  .status span {
    border-right: 1px solid #c4c4c4;
    text-align: center;
    line-height: 12px;
    overflow: hidden;
  }
  .status .s-pt { width: 121px; text-align: left; padding-left: 4px; }
  .s-gap { width: 67px; }
  .status .s-user { width: 148px; color: #0000e0; font: var(--strong); }
  .s-fill { flex: 1; }
  .s-ver { width: 116px; }
  .s-build { width: 66px; }
  .status .s-host {
    display: flex;
    align-items: center;
    justify-content: space-between;
    width: 116px;
    padding: 0 1px;
  }
  .s-host .icon {
    width: 12px;
    height: 12px;
  }
  .status .s-date { width: 93px; }

  /* dialog */
  .dialog {
    position: absolute;
    top: 32px;
    left: 297px;
    width: 431px;
    border: 1px solid #3f8fdc;
    background: #abcaf2;
    box-shadow: 2px 3px 14px rgba(0, 0, 0, 0.45);
  }
  .dlg-title {
    display: flex;
    align-items: center;
    gap: 3px;
    height: 20px;
    padding: 0 12px 0 4px;
    background: #fff;
    font: 9px/14px Roboto, sans-serif;
  }
  .dlg-title .icon {
    width: 12px;
    height: 12px;
  }
  .dlg-title span {
    flex: 1;
  }
  .dlg-title button {
    width: 10px;
    margin-left: 21px;
    font-weight: bold;
  }
  .dlg-title button svg {
    stroke: #333;
  }
  .dlg-body {
    padding: 4px 4px 0 5px;
  }
  .entered {
    display: flex;
    justify-content: flex-end;
    gap: 54px;
    height: 20px;
    padding-right: 14px;
    border: 1px solid #c9a45c;
    background: linear-gradient(#fff3d0, #ffdc8a 50%, #ffb934);
    line-height: 19px;
  }
  .dlg-cols {
    display: flex;
    gap: 5px;
  }
  .dlg-form {
    flex: 1;
    min-width: 0;
    display: flex;
    flex-direction: column;
  }
  .grp {
    border: 1px solid #7f9cc4;
    background: linear-gradient(#abcaf2, #fff);
  }
  .grp label {
    font: var(--strong);
  }
  .field {
    display: flex;
    flex-direction: column;
  }
  .grp input[type="text"], .grp textarea {
    min-width: 0;
  }
  .patient {
    padding: 5px 7px 1px 6px;
  }
  .top-row {
    display: flex;
  }
  .top-row label {
    height: 12px;
  }
  #patient {
    width: 162px;
    height: 13px;
    padding-left: 1px;
    border: 1px solid #a8a8a8;
    background: #fff;
  }
  .pair {
    display: flex;
    gap: 3px;
  }
  .pair .combo {
    height: 13px;
  }
  .dur {
    width: 40px;
    align-items: flex-end;
  }
  .facts {
    display: flex;
    margin-top: 4px;
  }
  .facts-l {
    width: 166px;
  }
  .facts-r {
    line-height: 10px;
  }
  .fact {
    display: flex;
    gap: 4px;
  }
  .fact b {
    width: 38px;
    flex: none;
    text-align: right;
  }
  .fact .sex {
    margin-left: 10px;
  }
  .addr {
    margin: 3px 0;
    line-height: 12px;
  }
  .phones {
    display: flex;
    gap: 3px;
    padding: 0 0 2px 22px;
  }
  .proc-row {
    display: flex;
    gap: 14px;
    margin-top: 13px;
  }
  .proc-row label {
    height: 12px;
  }
  .proc {
    width: 162px;
  }
  .room-f {
    flex: 1;
  }
  .case {
    padding: 2px 7px 2px 6px;
  }
  .case-row {
    display: flex;
    align-items: center;
    height: 16px;
  }
  .case-row label {
    width: 30px;
    flex: none;
    text-align: center;
  }
  .case-row .auth {
    width: 67px;
    padding-right: 4px;
    text-align: right;
  }
  .w-case {
    width: 132px;
  }
  .office-no {
    width: 133px;
    height: 14px;
    padding-left: 1px;
    border: 1px solid #1a2a50;
    background: #abcaf2;
    font: var(--strong);
  }
  .note-row {
    display: flex;
    gap: 6px;
  }
  #note {
    height: 34px;
    border: 1px solid #a8a8a8;
    background: #fff;
    resize: none;
  }
  .confirm {
    width: 36px;
    display: flex;
    flex-direction: column;
  }
  .confirm label {
    display: flex;
    align-items: center;
    gap: 2px;
    padding-left: 4px;
    height: 15px;
    font: var(--plain);
  }
  .reminder {
    margin-top: 2px;
    padding: 1px 7px 2px;
  }
  .rem-top {
    display: flex;
    gap: 40px;
    align-items: center;
    color: #000080;
    font: var(--strong);
  }
  .rem-top label {
    display: flex;
    align-items: center;
  }
  .rem-row {
    display: flex;
    margin-top: 9px;
  }
  .rem-by {
    position: relative;
    width: 60px;
    margin-right: 14px;
  }
  .blue {
    color: #0000e8;
  }
  .rem-status {
    width: 59px;
    margin-right: 15px;
  }
  .rem-attempt {
    width: 40px;
    margin-right: 15px;
  }
  .resched {
    width: 41px;
  }
  .dropdown {
    position: absolute;
    z-index: 2;
    top: 24px;
    left: 0;
    width: 60px;
    margin: 0;
    padding: 0;
    border: 1px solid #555;
    background: #fff;
    list-style: none;
  }
  .dropdown li {
    padding-left: 1px;
  }
  .dropdown .on {
    background: #0078d7;
    color: #fff;
  }
  .medical {
    margin-top: 3px;
    padding: 14px 11px 5px 6px;
  }
  .medical label {
    font: var(--plain);
  }
  .med-top {
    display: flex;
    align-items: center;
    gap: 5px;
    padding-left: 43px;
  }
  .med-top .combo {
    width: 65px;
  }
  .pending {
    width: 57px;
    height: 14px;
    margin-left: auto;
    border: 1px solid #222;
    font: var(--strong);
  }
  .med-grid {
    display: flex;
    gap: 4px;
    margin-top: 4px;
  }
  .med-left {
    width: 184px;
    display: flex;
    flex-direction: column;
    gap: 2px;
  }
  .med-left div {
    display: flex;
    align-items: center;
    gap: 2px;
  }
  .med-left label {
    width: 41px;
    flex: none;
    text-align: right;
  }
  .med-grid > label {
    width: 24px;
    padding: 2px 0 0 2px;
  }
  #refdr, #med-note {
    flex: 1;
    height: 14px;
    border: 1px solid #8fa9cc;
    background: #abcaf2;
    resize: none;
  }
  #med-note {
    height: 30px;
  }

  .tbl {
    margin-top: 2px;
    border: 1px solid #7f9cc4;
    background: #fff;
  }
  .tbl table {
    width: 100%;
    table-layout: fixed;
    border-collapse: collapse;
  }
  .tbl th {
    height: 13px;
    padding: 0 1px;
    border-right: 1px solid #aaa;
    background: linear-gradient(#fff, #dcdcdc);
    text-align: left;
    overflow: hidden;
  }
  .tbl td {
    height: 16px;
    padding: 0 1px;
    overflow: hidden;
  }
  .ins td {
    border-bottom: 1px solid #d4dce8;
  }
  .ins tr:nth-child(2) td {
    background: #eaf1fc;
  }
  .tbl input {
    display: block;
    margin-left: 1px;
  }
  .tbl .num, .tbl .inc {
    text-align: right;
  }
  .tbl td.num {
    padding-right: 4px;
  }
  .tbl th.num {
    padding-right: 3px;
  }
  .tbl .mid, .tbl .p {
    text-align: center;
  }
  .p {
    font: var(--strong);
  }
  .links {
    display: flex;
    gap: 8px;
    padding: 15px 6px 1px;
  }
  .links a {
    display: flex;
    align-items: center;
    gap: 1px;
    color: #14508c;
    text-decoration: none;
  }
  .links .icon {
    width: 12px;
    height: 12px;
  }
  .hscroll {
    display: flex;
    align-items: center;
    gap: 3px;
    height: 11px;
    padding: 0 3px;
    background: #f0f0f0;
  }
  .hscroll span {
    width: 200px;
    height: 11px;
    margin-right: auto;
    background: #cdcdcd;
  }
  .fa-row {
    display: flex;
  }
  .fa-main {
    flex: 1;
    min-width: 0;
  }
  .fa .red {
    color: #f01818;
  }
  .fa .cut {
    color: #111;
  }
  .fa-spin {
    width: 13px;
    display: flex;
    flex-direction: column;
    align-items: center;
    gap: 8px;
    padding-top: 3px;
    background: #f0f0f0;
  }

  .dlg-side {
    width: 76px;
    display: flex;
    flex-direction: column;
    gap: 3px;
    margin-top: 3px;
    padding: 208px 2px 2px;
    border: 1px solid #7f9cc4;
    background: linear-gradient(#abcaf2, #fff);
  }
  .dlg-side button {
    display: flex;
    align-items: center;
    height: 17px;
    padding: 0 4px 0 1px;
    border: 1px solid #a8b0bc;
    background: #e1e1e1;
    font: var(--strong);
  }
  .dlg-side .icon {
    background: #fff8e8;
  }
  .dlg-side span {
    flex: 1;
  }
  .dlg-side .default {
    border: 2px solid #0078d7;
  }
  .tri {
    width: 7px;
    height: 5px;
  }
  .space {
    flex: 1;
  }
</style>
